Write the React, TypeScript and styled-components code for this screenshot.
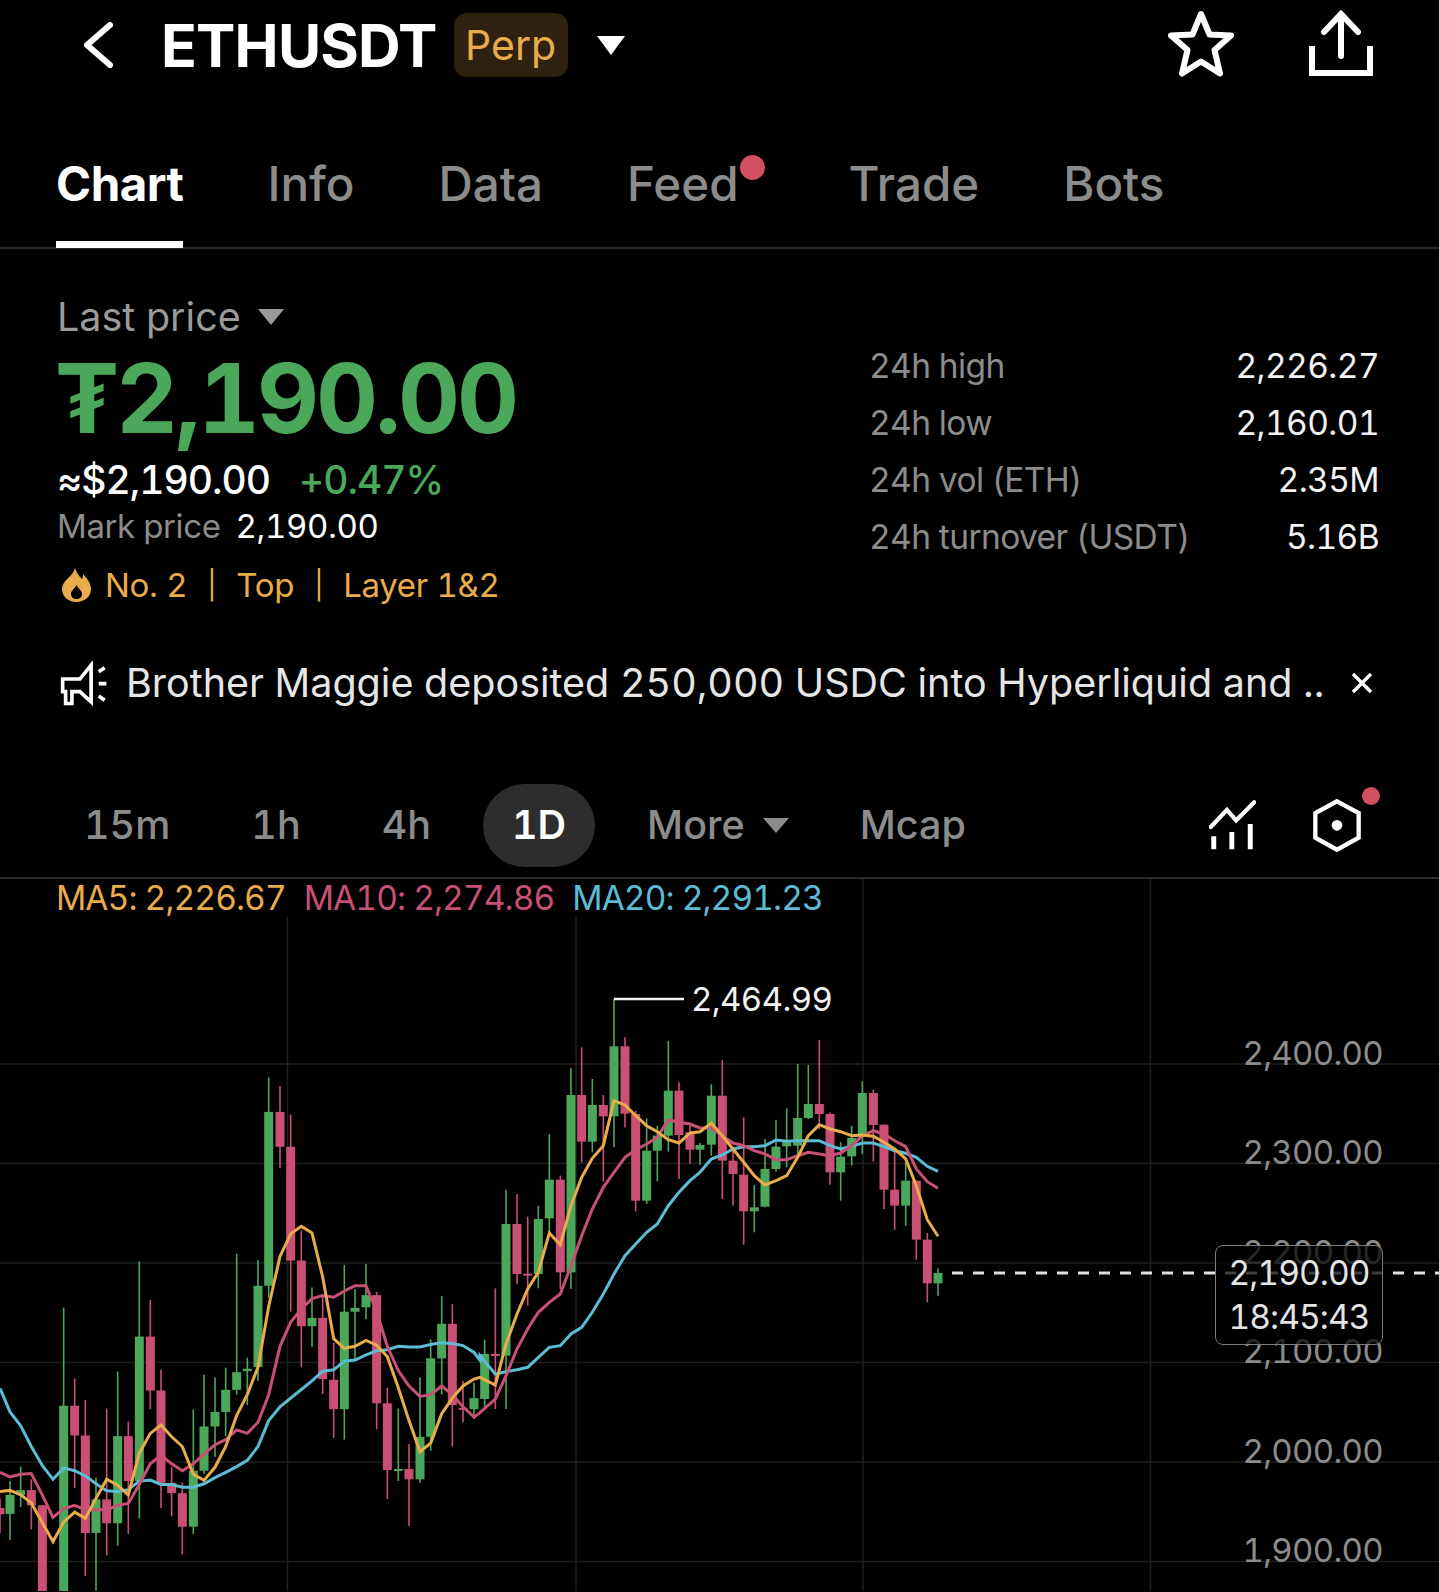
import React from 'react';
import styled, { createGlobalStyle } from 'styled-components';

const GlobalStyle = createGlobalStyle`
  html, body { margin: 0; padding: 0; background: #000; }
  * { box-sizing: border-box; }
`;

const orange = '#e9ac4a';
const green = '#4ba85a';
const red = '#c94f74';
const blue = '#5cbcd4';
const muted = '#8c8c8c';

// candles: [x, wickTop, wickBottom, bodyTop, bodyBottom, up], read off the chart, left part then right part
type Candle = [number, number, number, number, number, number];

const leftCandles: Candle[] = [
  [0, 1300, 1400, 1328, 1346, 0], [30, 1250, 1420, 1290, 1345, 1], [62, 1208, 1325, 1276, 1290, 1],
  [94, 1245, 1390, 1276, 1320, 0], [127, 1320, 1570, 1320, 1570, 0], [191, 748, 1570, 1032, 1570, 1],
  [224, 953, 1270, 1032, 1118, 0], [256, 1015, 1525, 1118, 1400, 0], [288, 1240, 1570, 1303, 1400, 1],
  [320, 1040, 1465, 1303, 1372, 0], [353, 933, 1437, 1120, 1372, 1], [385, 1078, 1403, 1120, 1250, 0],
  [418, 615, 1358, 832, 1250, 1], [451, 726, 1042, 832, 988, 0], [483, 928, 1328, 988, 1255, 0],
  [515, 1210, 1352, 1255, 1285, 0], [547, 1255, 1462, 1285, 1382, 0], [580, 1043, 1403, 1220, 1382, 1],
  [612, 942, 1230, 1092, 1220, 1], [645, 950, 1180, 1050, 1092, 1], [677, 922, 1120, 986, 1050, 1],
  [710, 592, 1000, 935, 986, 1], [742, 893, 1030, 925, 932, 1], [774, 610, 960, 685, 920, 1],
  [806, 82, 720, 182, 685, 1], [840, 107, 345, 182, 283, 0], [872, 190, 760, 283, 612, 0],
  [904, 525, 920, 612, 802, 0], [936, 690, 862, 778, 802, 1], [968, 715, 998, 778, 955, 0],
  [1001, 850, 1125, 957, 1042, 0], [1033, 625, 1130, 760, 1042, 1], [1065, 695, 895, 749, 760, 1],
  [1098, 622, 782, 712, 747, 1], [1130, 703, 1100, 712, 1025, 0], [1162, 980, 1302, 1025, 1218, 0],
  [1195, 1040, 1250, 1215, 1219, 1], [1227, 1143, 1380, 1215, 1245, 0], [1260, 950, 1255, 1122, 1245, 1],
  [1292, 840, 1162, 895, 1122, 1], [1325, 715, 1000, 795, 895, 1], [1357, 738, 1150, 795, 1030, 0],
  [1389, 960, 1080, 1038, 1042, 0], [1422, 965, 1070, 1010, 1042, 1],
];

const rightCandles: Candle[] = [
  [14, 1082, 1290, 1125, 1260, 1], [46, 928, 1290, 1125, 1130, 0], [78, 632, 1290, 735, 1130, 1],
  [111, 645, 915, 735, 885, 0], [143, 713, 980, 884, 887, 0], [175, 680, 928, 720, 885, 1],
  [208, 465, 760, 602, 718, 1], [241, 590, 930, 602, 880, 0], [273, 267, 930, 348, 880, 1],
  [305, 205, 550, 348, 488, 0], [337, 300, 520, 378, 488, 1], [370, 348, 608, 378, 412, 0],
  [402, 60, 505, 202, 412, 1], [435, 175, 445, 202, 404, 0], [467, 395, 697, 405, 665, 0],
  [500, 418, 675, 515, 665, 1], [532, 440, 607, 470, 515, 1], [565, 186, 518, 335, 470, 1],
  [597, 310, 600, 335, 468, 0], [630, 430, 555, 460, 512, 0], [660, 492, 558, 498, 512, 1],
  [694, 316, 530, 350, 497, 1], [727, 243, 660, 350, 545, 0], [759, 515, 680, 545, 585, 0],
  [791, 415, 797, 587, 697, 0], [823, 618, 760, 685, 697, 1], [855, 480, 685, 570, 683, 1],
  [888, 423, 578, 503, 570, 1], [920, 388, 565, 490, 502, 1], [953, 255, 535, 417, 500, 1],
  [985, 258, 420, 375, 417, 1], [1018, 183, 450, 375, 405, 0], [1050, 400, 617, 405, 580, 0],
  [1082, 490, 665, 533, 580, 1], [1115, 440, 560, 477, 532, 1], [1147, 307, 525, 342, 470, 1],
  [1180, 332, 548, 342, 438, 0], [1212, 437, 690, 437, 632, 0], [1244, 510, 752, 632, 680, 0],
  [1277, 550, 740, 605, 680, 1], [1309, 605, 842, 605, 782, 0], [1342, 762, 970, 782, 913, 0],
  [1374, 868, 950, 882, 913, 1],
];

const leftX = (x: number) => x / 3;
const leftY = (y: number) => 1050 + y / 2.893;
const rightX = (x: number) => 480 + x / 3;
const rightY = (y: number) => 980 + y / 3;

const ma5Left = [0,1280,30,1277,62,1290,94,1313,127,1370,159,1425,191,1368,224,1340,256,1358,288,1300,320,1245,353,1262,385,1290,418,1170,451,1112,483,1088,515,1122,547,1150,580,1230,612,1248,645,1210,677,1150,710,1060,742,1000,774,920,806,745,840,600,872,535,904,513,936,532,968,660,1001,838,1033,866,1065,860,1098,843,1130,857,1162,890,1195,980,1227,1075,1260,1165,1292,1140,1325,1055,1357,1010,1389,975,1422,955];
const ma5Right = [0,1195,46,1218,78,1095,111,1005,143,930,175,880,208,762,241,797,273,680,305,595,337,538,370,500,402,365,435,378,467,410,500,440,532,458,565,482,597,492,630,462,660,458,694,432,727,470,759,510,791,550,823,590,855,618,888,605,920,590,953,535,985,470,1018,437,1050,450,1082,458,1115,470,1147,468,1180,472,1212,490,1244,510,1277,540,1309,620,1342,722,1374,772];
const ma10Left = [0,1225,30,1238,62,1230,94,1228,127,1290,159,1355,191,1330,224,1320,256,1333,288,1333,320,1333,353,1320,385,1315,418,1260,451,1200,483,1175,515,1200,547,1220,580,1200,612,1172,645,1145,677,1130,710,1102,742,1112,774,1080,806,1000,840,860,872,790,904,752,936,722,968,713,1001,718,1033,700,1065,685,1098,685,1130,760,1162,860,1195,930,1227,975,1260,1005,1292,1000,1325,975,1357,1000,1389,1035,1422,1065,1440,1052];
const ma10Right = [46,1260,78,1190,111,1110,143,1050,175,1000,208,970,241,945,273,860,305,770,337,690,370,625,402,580,435,535,467,512,500,495,532,475,565,422,597,430,630,435,660,447,694,447,727,470,759,492,791,500,823,515,855,525,888,542,920,542,953,530,985,520,1018,525,1050,530,1082,522,1115,500,1147,470,1180,455,1212,465,1244,485,1277,503,1309,570,1342,608,1374,628];
const ma20Left = [0,982,30,1050,62,1090,94,1150,127,1205,159,1245,191,1212,224,1220,256,1235,288,1258,320,1278,353,1280,385,1275,418,1250,451,1247,483,1260,515,1260,547,1268,580,1268,612,1258,645,1240,677,1225,710,1208,742,1190,774,1150,806,1075,840,1035,872,1010,904,985,936,960,968,932,1001,928,1033,903,1065,900,1098,885,1130,873,1162,870,1195,860,1227,862,1260,862,1292,855,1325,850,1357,852,1389,858,1422,878,1440,900];
const ma20Right = [0,1130,46,1185,78,1178,111,1172,143,1165,175,1135,208,1105,241,1100,273,1065,305,1045,337,1000,370,945,402,885,435,830,467,795,500,760,532,735,565,680,597,640,630,605,660,580,694,540,727,528,759,510,791,503,823,503,855,500,888,483,920,487,953,485,985,485,1018,485,1050,500,1082,510,1115,502,1147,492,1180,492,1212,503,1244,515,1277,523,1309,535,1342,562,1374,577];

const toPoints = (left: number[], right: number[]) => {
  const out: string[] = [];
  for (let i = 0; i < left.length; i += 2) out.push(`${leftX(left[i]).toFixed(1)},${leftY(left[i + 1]).toFixed(1)}`);
  for (let i = 0; i < right.length; i += 2) out.push(`${rightX(right[i]).toFixed(1)},${rightY(right[i + 1]).toFixed(1)}`);
  return out.join(' ');
};

const Page = styled.div`
  width: 1439px;
  height: 1592px;
  overflow: hidden;
  background: #000;
  color: #fff;
  font-family: Inter, "Liberation Sans", sans-serif;
  font-feature-settings: "tnum";
`;

const Header = styled.header`
  height: 90px;
  display: flex;
  align-items: center;
  padding: 0 66px 0 83px;
`;

const BackIcon = styled.svg`
  width: 30px;
  height: 46px;
  margin-right: 48px;
`;

const Symbol = styled.h1`
  margin: 0;
  font-size: 59px;
  font-weight: 700;
  letter-spacing: -0.8px;
`;

const Badge = styled.span`
  margin-left: 17px;
  height: 64px;
  width: 114px;
  border-radius: 13px;
  background: #2e2110;
  color: ${orange};
  font-size: 41px;
  display: flex;
  align-items: center;
  justify-content: center;
`;

const Caret = styled.i<{ $w: number; $h: number; $color: string }>`
  display: inline-block;
  width: 0;
  height: 0;
  border-left: ${({ $w }) => $w / 2}px solid transparent;
  border-right: ${({ $w }) => $w / 2}px solid transparent;
  border-top: ${({ $h }) => $h}px solid ${({ $color }) => $color};
`;

const HeaderCaret = styled(Caret)`
  margin-left: 29px;
`;

const HeaderActions = styled.div`
  margin-left: auto;
  margin-bottom: 4px;
  display: flex;
  align-items: center;
  gap: 75px;
`;

const TabBar = styled.nav`
  margin-top: 40px;
  height: 119px;
  display: flex;
  gap: 84px;
  padding-left: 56px;
  border-bottom: 2px solid #2b2b2b;
`;

const Tab = styled.div<{ $active?: boolean; $dot?: boolean }>`
  position: relative;
  height: 118px;
  padding-top: 22px;
  font-size: 47.5px;
  line-height: 64px;
  font-weight: ${({ $active }) => ($active ? 700 : 500)};
  letter-spacing: ${({ $active }) => ($active ? '-0.5px' : '0')};
  color: ${({ $active }) => ($active ? '#fff' : muted)};
  border-bottom: ${({ $active }) => ($active ? '7px solid #fff' : '7px solid transparent')};
  margin-right: ${({ $dot }) => ($dot ? '26px' : '0')};
`;

const TabDot = styled.span`
  position: absolute;
  top: 25px;
  right: -26px;
  width: 25px;
  height: 25px;
  border-radius: 50%;
  background: #d1505f;
`;

const Summary = styled.section`
  height: 376px;
  padding: 46px 60px 0 57px;
  display: flex;
  justify-content: space-between;
`;

const PriceColumn = styled.div`
  display: flex;
  flex-direction: column;
`;

const LastPrice = styled.div`
  display: flex;
  align-items: center;
  gap: 17px;
  height: 44px;
  font-size: 39.5px;
  color: #9a9a9a;
`;

const BigPrice = styled.div`
  margin-top: 15px;
  height: 88px;
  line-height: 88px;
  font-size: 96px;
  font-weight: 700;
  letter-spacing: -3px;
  margin-left: -2px;
  color: ${green};
`;

const ConvertRow = styled.div`
  margin-top: 15px;
  height: 46px;
  line-height: 46px;
  display: flex;
  gap: 29px;
  font-size: 39px;
  font-weight: 500;
  letter-spacing: -1px;
`;

const Change = styled.span`
  color: ${green};
`;

const MarkRow = styled.div`
  margin-top: 3px;
  height: 40px;
  line-height: 40px;
  display: flex;
  gap: 15px;
  font-size: 33px;
  letter-spacing: -0.4px;
`;

const MarkLabel = styled.span`
  color: ${muted};
`;

const TagRow = styled.div`
  margin-top: 17px;
  height: 44px;
  display: flex;
  align-items: center;
  font-size: 33px;
  color: ${orange};
  letter-spacing: -0.3px;
`;

const Flame = styled.svg`
  width: 29px;
  height: 34px;
  margin: 0 14px 0 5px;
`;

const TagSep = styled.span`
  margin: 0 20px;
  font-size: 28px;
`;

const Stats = styled.dl`
  margin: 42px 0 0;
  width: 510px;
  display: flex;
  flex-direction: column;
`;

const StatRow = styled.div`
  height: 57px;
  display: flex;
  align-items: center;
  justify-content: space-between;
  font-size: 33.5px;
  letter-spacing: -0.6px;
`;

const StatLabel = styled.dt`
  color: ${muted};
`;

const StatValue = styled.dd`
  margin: 0;
  color: #f2f2f2;
`;

const Notice = styled.div`
  height: 62px;
  margin-top: 27px;
  padding: 0 65px 0 60px;
  display: flex;
  align-items: center;
  font-size: 39.5px;
  color: #e6e6e6;
  white-space: nowrap;
`;

const NoticeIcon = styled.svg`
  width: 48px;
  height: 45px;
  margin-right: 18px;
  flex: none;
`;

const NoticeClose = styled.svg`
  width: 24px;
  height: 24px;
  margin-left: auto;
  flex: none;
`;

const TimeRow = styled.div`
  margin-top: 64px;
  height: 101px;
  display: flex;
  align-items: center;
  gap: 23px;
  padding: 0 57px 5px 55px;
  border-bottom: 2px solid #2b2b2b;
`;

const TimeItem = styled.div<{ $active?: boolean }>`
  height: 83px;
  padding: 0 29px;
  display: flex;
  align-items: center;
  gap: 18px;
  border-radius: 42px;
  font-size: 39.5px;
  font-weight: ${({ $active }) => ($active ? 600 : 500)};
  color: ${({ $active }) => ($active ? '#fff' : muted)};
  background: ${({ $active }) => ($active ? '#2d2d2d' : 'transparent')};
`;

const MoreItem = styled(TimeItem)`
  padding-right: 19px;
`;

const ToolIcons = styled.div`
  margin-left: auto;
  display: flex;
  align-items: center;
  gap: 56px;
  position: relative;
  padding-right: 20px;
`;

const ToolDot = styled.span`
  position: absolute;
  top: -11px;
  right: 2px;
  width: 18px;
  height: 18px;
  border-radius: 50%;
  background: #d1505f;
`;

const ChartArea = styled.div`
  position: relative;
  height: 712px;
`;

const ChartSvg = styled.svg`
  display: block;
  width: 1439px;
  height: 712px;
`;

const MaRow = styled.div`
  position: absolute;
  top: 0;
  left: 56px;
  height: 38px;
  display: flex;
  align-items: center;
  gap: 18px;
  background: #000;
  font-size: 33.5px;
  letter-spacing: -0.9px;
`;

const MaValue = styled.span<{ $color: string }>`
  color: ${({ $color }) => $color};
`;

const HighLabel = styled.span`
  position: absolute;
  left: 691px;
  top: 100px;
  line-height: 40px;
  font-size: 33px;
  letter-spacing: -0.6px;
  color: #f2f2f2;
`;

const Axis = styled.div`
  position: absolute;
  top: 124px;
  right: 56px;
  display: flex;
  flex-direction: column;
  align-items: flex-end;
`;

const AxisLabel = styled.span`
  height: 99.5px;
  display: flex;
  align-items: center;
  font-size: 33px;
  letter-spacing: -0.7px;
  color: ${muted};
`;

const PriceTag = styled.div`
  position: absolute;
  top: 366px;
  left: 1215px;
  width: 168px;
  height: 100px;
  border: 1.5px solid #7d7d7d;
  border-radius: 8px;
  background: rgba(0, 0, 0, 0.72);
  display: flex;
  flex-direction: column;
  align-items: center;
  justify-content: center;
  font-size: 33.5px;
  letter-spacing: -0.9px;
  line-height: 44px;
  color: #e4e4e4;
`;

const stats = [
  ['24h high', '2,226.27'],
  ['24h low', '2,160.01'],
  ['24h vol (ETH)', '2.35M'],
  ['24h turnover (USDT)', '5.16B'],
];

const tabs = ['Chart', 'Info', 'Data', 'Feed', 'Trade', 'Bots'];

const CandleGroup = ({ list, fx, fy }: { list: Candle[]; fx: (n: number) => number; fy: (n: number) => number }) => (
  <>
    {list.map(([x, wt, wb, bt, bb, up]) => {
      const color = up ? green : red;
      const cx = fx(x);
      return (
        <g key={x} fill={color}>
          <rect x={cx - 0.8} y={fy(wt)} width={1.6} height={fy(wb) - fy(wt)} />
          <rect x={cx - 4.5} y={fy(bt)} width={9} height={Math.max(fy(bb) - fy(bt), 2)} />
        </g>
      );
    })}
  </>
);

export default function App() {
  return (
    <Page>
      <GlobalStyle />
      <Header>
        <BackIcon viewBox="0 0 30 46">
          <path d="M27 3 L4 23 L27 43" fill="none" stroke="#fff" strokeWidth="6" strokeLinecap="round" strokeLinejoin="round" />
        </BackIcon>
        <Symbol>ETHUSDT</Symbol>
        <Badge>Perp</Badge>
        <HeaderCaret $w={28} $h={19} $color="#fff" />
        <HeaderActions>
          <svg width="66" height="67" viewBox="0 0 66 67">
            <path d="M33 4 L41.5 24.5 L63 25.5 L46.5 40 L52 63.5 L33 51.5 L14 63.5 L19.5 40 L3 25.5 L24.5 24.5 Z" fill="none" stroke="#fff" strokeWidth="6" strokeLinejoin="round" />
          </svg>
          <svg width="64" height="67" viewBox="1309 10 64 67">
            <path d="M1341 56 V14 M1324 32 L1341 14 L1358 32" fill="none" stroke="#fff" strokeWidth="6" strokeLinecap="round" strokeLinejoin="miter" />
            <path d="M1312 46 V73 H1370 V46" fill="none" stroke="#fff" strokeWidth="6" />
          </svg>
        </HeaderActions>
      </Header>

      <TabBar>
        {tabs.map((t) => (
          <Tab key={t} $active={t === 'Chart'} $dot={t === 'Feed'}>
            {t}
            {t === 'Feed' && <TabDot />}
          </Tab>
        ))}
      </TabBar>

      <Summary>
        <PriceColumn>
          <LastPrice>
            Last price
            <Caret $w={26} $h={16} $color="#9a9a9a" />
          </LastPrice>
          <BigPrice>₮2,190.00</BigPrice>
          <ConvertRow>
            <span>≈$2,190.00</span>
            <Change>+0.47%</Change>
          </ConvertRow>
          <MarkRow>
            <MarkLabel>Mark price</MarkLabel>
            <span>2,190.00</span>
          </MarkRow>
          <TagRow>
            <Flame viewBox="0 0 29 34">
              <path
                fillRule="evenodd"
                fill={orange}
                d="M13 0 C15 6 18 9 20 11 C21 9 21 8 21 6 C26 11 29 16 29 21 C29 29 22 34 14.5 34 C6 34 0 28 0 21 C0 12 11 9 13 0 Z M14.5 17 C16 21 20 22 20 26 C20 29.5 17.5 31 14.5 31 C11.5 31 9 29 9 26 C9 22 13 21 14.5 17 Z"
              />
            </Flame>
            No. 2<TagSep>|</TagSep>Top<TagSep>|</TagSep>Layer 1&amp;2
          </TagRow>
        </PriceColumn>
        <Stats>
          {stats.map(([label, value]) => (
            <StatRow key={label}>
              <StatLabel>{label}</StatLabel>
              <StatValue>{value}</StatValue>
            </StatRow>
          ))}
        </Stats>
      </Summary>

      <Notice>
        <NoticeIcon viewBox="180 60 145 135">
          <path d="M188 114 H240 L274 72 V183 L240 152 H216 V188 H197 V152 H188 Z" fill="none" stroke="#fff" strokeWidth="11" />
          <path d="M297 92 L315 80 M297 128 H320 M297 165 L315 178" fill="none" stroke="#fff" strokeWidth="11" />
        </NoticeIcon>
        Brother Maggie deposited 250,000 USDC into Hyperliquid and ..
        <NoticeClose viewBox="0 0 24 24">
          <path d="M3 3 L21 21 M21 3 L3 21" stroke="#fff" strokeWidth="3.4" />
        </NoticeClose>
      </Notice>

      <TimeRow>
        <TimeItem>15m</TimeItem>
        <TimeItem>1h</TimeItem>
        <TimeItem>4h</TimeItem>
        <TimeItem $active>1D</TimeItem>
        <MoreItem>
          More
          <Caret $w={26} $h={15} $color={muted} />
        </MoreItem>
        <TimeItem>Mcap</TimeItem>
        <ToolIcons>
          <svg width="47" height="50" viewBox="178 90 142 152">
            <path d="M183 172 L232 120 L260 152 L315 97" fill="none" stroke="#fff" strokeWidth="13" strokeLinecap="round" />
            <path d="M192 200 V240 M247 187 V240 M303 163 V240" fill="none" stroke="#fff" strokeWidth="15" />
          </svg>
          <svg width="50" height="55" viewBox="488 88 150 165">
            <path d="M563 98 L628 133 V207 L563 243 L498 207 V133 Z" fill="none" stroke="#fff" strokeWidth="13" />
            <circle cx="563" cy="170" r="16" fill="#fff" />
          </svg>
          <ToolDot />
        </ToolIcons>
      </TimeRow>

      <ChartArea>
        <ChartSvg viewBox="0 880 1439 712">
          {[1065, 1164.5, 1264, 1363.5, 1463, 1562.5].map((y) => (
            <line key={y} x1="0" x2="1439" y1={y} y2={y} stroke="#1f1f1f" strokeWidth="1.5" />
          ))}
          {[287.5, 576, 863, 1150.5].map((x) => (
            <line key={x} x1={x} x2={x} y1="880" y2="1592" stroke="#1f1f1f" strokeWidth="1.5" />
          ))}
          <CandleGroup list={leftCandles} fx={leftX} fy={leftY} />
          <CandleGroup list={rightCandles} fx={rightX} fy={rightY} />
          <polyline points={toPoints(ma20Left, ma20Right)} fill="none" stroke={blue} strokeWidth="3" />
          <polyline points={toPoints(ma10Left, ma10Right)} fill="none" stroke={red} strokeWidth="3" />
          <polyline points={toPoints(ma5Left, ma5Right)} fill="none" stroke={orange} strokeWidth="3" />
          <path d="M614 1000 H684" stroke="#f2f2f2" strokeWidth="2.5" />
          <line x1="952" x2="1439" y1="1274" y2="1274" stroke="#e0e0e0" strokeWidth="3" strokeDasharray="11 10" />
        </ChartSvg>
        <MaRow>
          <MaValue $color={orange}>MA5: 2,226.67</MaValue>
          <MaValue $color={red}>MA10: 2,274.86</MaValue>
          <MaValue $color={blue}>MA20: 2,291.23</MaValue>
        </MaRow>
        <HighLabel>2,464.99</HighLabel>
        <Axis>
          {['2,400.00', '2,300.00', '2,200.00', '2,100.00', '2,000.00', '1,900.00'].map((l) => (
            <AxisLabel key={l}>{l}</AxisLabel>
          ))}
        </Axis>
        <PriceTag>
          <span>2,190.00</span>
          <span>18:45:43</span>
        </PriceTag>
      </ChartArea>
    </Page>
  );
}
